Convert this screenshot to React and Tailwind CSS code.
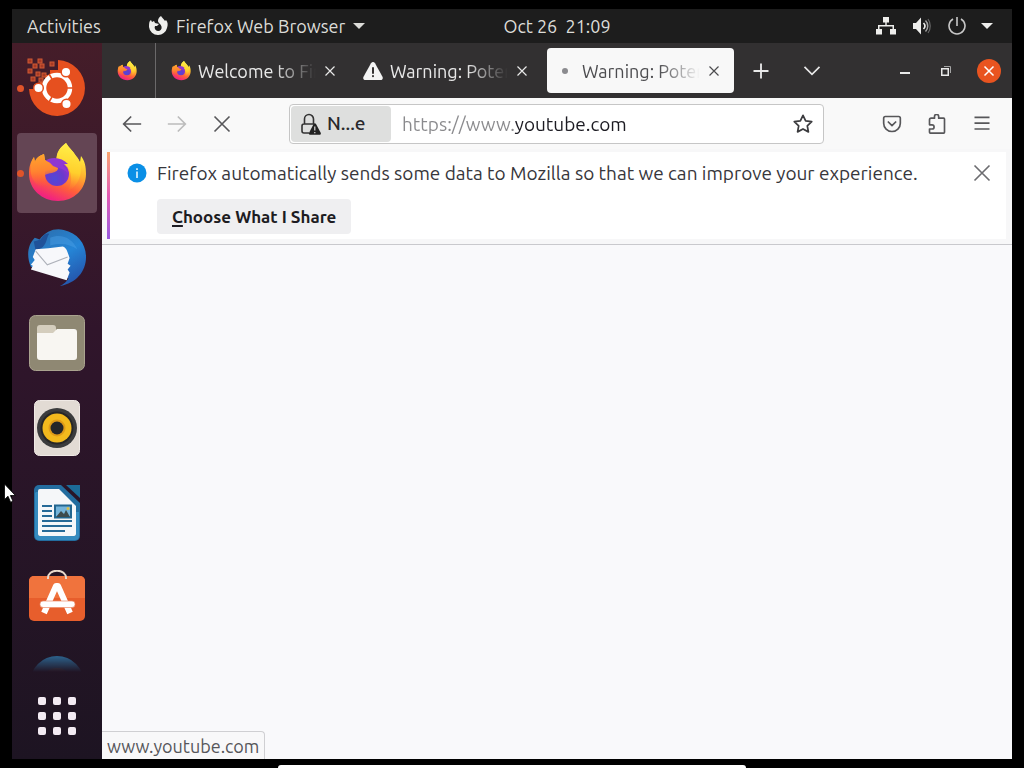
import React, { useId } from "react";

function FirefoxLogo({ className }) {
  const id = useId().replace(/[^a-zA-Z0-9]/g, "");
  return (
    <svg viewBox="0 0 58 60" className={className} aria-hidden="true">
      <defs>
        <linearGradient id={`${id}b`} x1="0.75" y1="0.05" x2="0.35" y2="1">
          <stop offset="0.1" stopColor="#fff03e" />
          <stop offset="0.4" stopColor="#ffb22e" />
          <stop offset="0.68" stopColor="#ff6138" />
          <stop offset="0.95" stopColor="#f2247e" />
        </linearGradient>
        <linearGradient id={`${id}f`} x1="0.6" y1="0" x2="0.5" y2="1">
          <stop offset="0" stopColor="#fff14a" />
          <stop offset="0.6" stopColor="#ffcf2c" />
          <stop offset="1" stopColor="#ff8a2a" stopOpacity="0" />
        </linearGradient>
        <linearGradient id={`${id}w`} x1="0.3" y1="0" x2="0.4" y2="1">
          <stop offset="0" stopColor="#ffa52c" />
          <stop offset="0.5" stopColor="#ff8430" />
          <stop offset="1" stopColor="#ff5a3a" stopOpacity="0" />
        </linearGradient>
        <radialGradient id={`${id}g`} cx="0.4" cy="0.7" r="0.75">
          <stop offset="0" stopColor="#4f49d8" />
          <stop offset="0.5" stopColor="#6a39cc" />
          <stop offset="1" stopColor="#9531cc" />
        </radialGradient>
      </defs>
      <path
        fill={`url(#${id}b)`}
        d="M38 0c3 5 7 8 10 13 2 2 3 4 4 6l1-6c4 5 5 11 5 18 0 15-12 27-28 27S1 46 1 31c0-6 1-12 5-17l1 5c1-4 4-6 9-8l1 6c3 2 5 2 11 3 0-8 2-14 10-20z"
      />
      <path
        fill={`url(#${id}f)`}
        d="M38 0c3 5 7 8 10 13 5 6 6 13 4 20-2 7-6 12-12 15 4-8 4-16 1-22-4-6-11-6-12-12 0-6 4-10 9-14z"
      />
      <circle cx="29" cy="31" r="12" fill={`url(#${id}g)`} />
      <path fill="#8f37d2" d="M17 18c6-5 17-4 23 3-3 0-4 0-5 2 3 2 4 4 5 7-6-5-10-6-17-6z" />
      <path
        fill={`url(#${id}w)`}
        d="M6 14l1 5c1-4 4-6 9-8l1 6c3 2 5 2 8 6l5 2c0 3-3 4-6 5-3 0-5 1-7 2 0 5 1 9 5 12-10 2-17-4-19-13-1-7 0-12 3-17z"
      />
    </svg>
  );
}

function UbuntuLogo() {
  const squares = [
    [3, 3], [13, 3], [8, 8], [15, 8], [3, 13], [11, 16], [17, 17], [6, 21], [25, 6], [14, 22],
  ];
  return (
    <svg viewBox="0 0 60 60" className="size-15" aria-hidden="true">
      <path fill="#e6501f" d="M31 2a28 28 0 1 1-29 29h6v-4h5v-4h5v-6h5v-5h8z" />
      {squares.map(([x, y]) => (
        <rect key={`${x}-${y}`} x={x - 2} y={y - 2} width="4" height="4" fill="#a83a25" stroke="#cf5a34" strokeWidth="1" />
      ))}
      <circle cx="30" cy="30" r="13" fill="none" stroke="#fff" strokeWidth="4.500" />
      <g stroke="#e6501f" strokeWidth="1.500">
        <path d="M40 30h7M25 21l-3-5M25 39l-3 5" />
        <circle cx="11.500" cy="30" r="4.800" fill="#fff" />
        <circle cx="39" cy="14" r="4.800" fill="#fff" />
        <circle cx="39.500" cy="46" r="4.800" fill="#fff" />
      </g>
    </svg>
  );
}

function ThunderbirdLogo() {
  return (
    <svg viewBox="0 0 62 62" className="size-15" aria-hidden="true">
      <defs>
        <linearGradient id="tb-body" x1="0.2" y1="0" x2="0.8" y2="1">
          <stop offset="0" stopColor="#2c6fae" />
          <stop offset="0.5" stopColor="#2585d6" />
          <stop offset="1" stopColor="#2450a8" />
        </linearGradient>
      </defs>
      <path fill="url(#tb-body)" d="M13 12C20 3 28 0 38 2c14 3 23 14 23 28 0 15-10 27-27 30 4-2 7-4 9-8L4 40C-1 28 1 17 8 10l3 1z" />
      <path fill="#1f5299" d="M14 12c3-5 6-7 9-6-3 4-2 9-7 14L9 24 7 14z" />
      <path fill="#50a6ea" opacity="0.4" d="M24 10c12-5 23 1 28 12-8-5-15-7-28-4z" />
      <path fill="#f7f8fb" d="M22 21l15-2c4 1 5 6 7 12l-2 6 3 2-3 4 2 3-3 8L4 43l2-4-2-1 4-5-2-3 3-8z" />
      <path fill="none" stroke="#aeb2ba" strokeWidth="1.200" d="M9 24l12 14 21-8" />
    </svg>
  );
}

function FilesLogo() {
  return (
    <svg viewBox="0 0 56 56" className="size-14" aria-hidden="true">
      <rect x="0.500" y="0.500" width="55" height="55" rx="6" fill="#8f8873" stroke="#aaa38f" />
      <path fill="#d4cdbd" d="M8 13a3 3 0 0 1 3-3h13a3 3 0 0 1 3 3v5H8z" />
      <path fill="#f8f6f2" d="M8 18h16l4-4h17a3 3 0 0 1 3 3v25a3 3 0 0 1-3 3H11a3 3 0 0 1-3-3z" />
    </svg>
  );
}

function RhythmboxLogo() {
  return (
    <svg viewBox="0 0 56 56" className="size-14" aria-hidden="true">
      <rect x="5.500" y="0.500" width="45" height="55" rx="5" fill="#e2dbd4" stroke="#f0eae6" />
      <circle cx="28" cy="28" r="20" fill="#3b3c3d" />
      <circle cx="28" cy="28" r="16.500" fill="#272727" />
      <circle cx="28" cy="28" r="14.500" fill="#f2b91d" />
      <circle cx="28" cy="28" r="8.500" fill="#df9b18" />
      <circle cx="28" cy="28" r="6.500" fill="#242629" />
    </svg>
  );
}

function WriterLogo() {
  return (
    <svg viewBox="0 0 56 56" className="size-14" aria-hidden="true">
      <path fill="#236d9f" d="M10 0h22l19 18v33a5 5 0 0 1-5 5H10a5 5 0 0 1-5-5V5a5 5 0 0 1 5-5z" />
      <path fill="#358bbf" d="M7 7h2v44h38V27h3v24a4 4 0 0 1-4 4H10a4 4 0 0 1-4-4V8z" />
      <path fill="#f5f7f9" d="M11 4h19l17 17v28a2 2 0 0 1-2 2H11a2 2 0 0 1-2-2V6a2 2 0 0 1 2-2z" />
      <path fill="#1c6b98" d="M37 0h14v13z" />
      <path stroke="#266a97" strokeWidth="2" d="M13 21h10M13 26h10M13 31h10M13 36h30M13 41h30M13 46h23" />
      <rect x="26" y="20.500" width="16" height="12" fill="#74b4da" stroke="#22668f" strokeWidth="2" />
      <path fill="#3d4b4e" d="M27 32l5-6 3 3 2-4 4 7z" />
      <circle cx="39" cy="23.500" r="1.500" fill="#d8bf4a" />
    </svg>
  );
}

function SoftwareLogo() {
  return (
    <svg viewBox="0 0 56 56" className="size-14" aria-hidden="true">
      <rect x="0" y="6" width="56" height="45" rx="5" fill="#e75e2c" />
      <path fill="#f0733d" d="M0 28h56V11a5 5 0 0 0-5-5H5a5 5 0 0 0-5 5z" />
      <path fill="none" stroke="#e9d9cc" strokeWidth="2" d="M19 9C18-2 38-2 37 9" />
      <path fill="none" stroke="#fff" strokeWidth="6" d="M15 43l12-27h2l12 27" strokeLinejoin="round" />
      <rect x="11" y="31" width="35" height="6.500" rx="3" fill="#fff" stroke="#e98b69" strokeWidth="0.700" />
    </svg>
  );
}

function HelpLogo() {
  return (
    <svg viewBox="0 0 56 56" className="size-14" aria-hidden="true">
      <circle cx="28" cy="28" r="27" fill="#2f77a8" />
      <circle cx="28" cy="28" r="15" fill="#6b7680" />
    </svg>
  );
}

function Glyph({ className, children, width = 1.6 }) {
  return (
    <svg viewBox="0 0 24 24" className={className} fill="none" stroke="currentColor" strokeWidth={width} aria-hidden="true">
      {children}
    </svg>
  );
}

const cross = <path d="M3 3l18 18M21 3L3 21" />;

const apps = [
  { name: "Ubuntu installer", logo: <UbuntuLogo />, running: true },
  { name: "Firefox", logo: <FirefoxLogo className="size-15" />, running: true, active: true },
  { name: "Thunderbird", logo: <ThunderbirdLogo /> },
  { name: "Files", logo: <FilesLogo /> },
  { name: "Rhythmbox", logo: <RhythmboxLogo /> },
  { name: "LibreOffice Writer", logo: <WriterLogo /> },
  { name: "Ubuntu Software", logo: <SoftwareLogo /> },
  { name: "Help", logo: <HelpLogo /> },
];

function TopBar() {
  return (
    <header className="flex h-[34px] shrink-0 items-center bg-[#1d1d1d] text-lg leading-6 text-[#dcdcd8]">
      <button className="w-[90px] shrink-0 pl-[15px] text-left">Activities</button>
      <div className="grid flex-1 grid-cols-[1fr_auto_1fr] items-center">
        <button className="ml-[46px] flex items-center gap-2 justify-self-start whitespace-nowrap">
          <svg viewBox="0 0 20 20" className="size-5" fill="#eeeeec" aria-hidden="true">
            <path d="M13 0c1 2 3 3 4 5l1-1c2 2 2 5 1 8a9 9 0 0 1-9 7 9 9 0 0 1-9-8C1 8 1 5 3 4l1 2 2-1 1 2 4 1-2 2H7a3.500 3.500 0 1 0 6.500.500C13 8 10 7 10 5s1-4 3-5z" />
          </svg>
          Firefox Web Browser
          <svg viewBox="0 0 12 6" className="h-[6px] w-3" fill="currentColor" aria-hidden="true"><path d="M0 0h12L6 6z" /></svg>
        </button>
        <button className="whitespace-pre">Oct 26  21:09</button>
        <button aria-label="System menu" className="mr-[19px] flex items-center gap-[15px] justify-self-end text-[#eeeeec]">
          <svg viewBox="-1 0 20 18" className="h-[18px] w-5" fill="currentColor" aria-hidden="true">
            <path d="M6 0h6v5.500h-2.300V8H17v4h2v5.500h-6V12h2.500V9.500h-13V12H5v5.500h-6V12h2V8h7.300V5.500H6z" />
          </svg>
          <svg viewBox="-1 0 20 20" className="size-5" aria-hidden="true">
            <path fill="currentColor" d="M1 7h3l5-5.500v17L4 13H1z" />
            <path fill="none" stroke="currentColor" strokeWidth="1.600" d="M11.500 7c2 2 2 4 0 6" />
            <path fill="none" stroke="#a5a5a5" strokeWidth="1.500" d="M13.500 4.500c3 3 3 8 0 11" />
            <path fill="none" stroke="#666" strokeWidth="1.200" d="M16 3c3 4 3 10 0 14" />
          </svg>
          <svg viewBox="-1 0 20 20" className="size-5" fill="none" stroke="#c8c8c8" strokeWidth="1.600" aria-hidden="true">
            <path d="M6 3a8 8 0 1 0 8 0M10 1v9" />
          </svg>
          <svg viewBox="0 0 12 6" className="h-[6px] w-3" fill="currentColor" aria-hidden="true"><path d="M0 0h12L6 6z" /></svg>
        </button>
      </div>
    </header>
  );
}

function Dock() {
  return (
    <nav aria-label="Dock" className="flex w-[90px] shrink-0 flex-col items-center bg-linear-to-b from-[#451d29] via-[#30152b] via-40% to-[#1d1422]">
      <div className="flex min-h-0 flex-1 flex-col gap-[5px] overflow-hidden pt-[5px] [mask-image:linear-gradient(to_top,transparent,black_20px)]">
        {apps.map((app) => (
          <button
            key={app.name}
            aria-label={app.name}
            className={`relative flex size-20 shrink-0 items-center justify-center rounded ${app.active ? "bg-[#644554]" : ""}`}
          >
            {app.running && <span className="absolute left-0 size-[7px] rounded-full bg-[#e0542a]" />}
            {app.logo}
          </button>
        ))}
      </div>
      <button aria-label="Show applications" className="grid h-[87px] shrink-0 grid-cols-3 place-content-center gap-[7px]">
        {Array.from({ length: 9 }, (_, i) => (
          <span key={i} className="size-2 rounded-xs bg-[#f3ebf3]" />
        ))}
      </button>
    </nav>
  );
}

function Tab({ title, icon, selected }) {
  return (
    <div
      role="tab"
      aria-selected={!!selected}
      className={`flex h-[45px] min-w-0 flex-[0_1_187px] items-center rounded pr-[14px] pl-2 ${selected ? "bg-[#f8f8f8] text-[#4c4c4f]" : "text-[#e9e9e9]"}`}
    >
      <span className="flex w-5 shrink-0 justify-center">{icon}</span>
      <span className="ml-[7px] min-w-0 flex-1 overflow-hidden text-lg leading-6 whitespace-nowrap [mask-image:linear-gradient(to_right,black_65%,transparent)]">
        {title}
      </span>
      <button aria-label="Close tab" className="ml-2 shrink-0">
        <Glyph className="size-3" width={2.4}>{cross}</Glyph>
      </button>
    </div>
  );
}

const warningIcon = (
  <svg viewBox="0 0 20 20" className="size-5" aria-hidden="true">
    <path fill="#f4f4f4" d="M8 2.200c1-1.700 3-1.700 4 0l7.500 13.500c.8 1.700 0 3.300-2 3.300h-15c-2 0-2.800-1.600-2-3.300z" />
    <path stroke="#353232" strokeWidth="2" strokeLinecap="round" d="M10 7v5M10 15v.2" />
  </svg>
);

function TabStrip() {
  return (
    <div className="flex h-[55px] shrink-0 items-center bg-[#323031] pr-[11px] text-[#e9e9e9]">
      <div role="tablist" className="flex h-full min-w-0 flex-1 items-center gap-[5px]">
        <div role="tab" aria-label="Pinned tab" className="mr-[2px] flex h-full w-[54px] shrink-0 items-center justify-center border-r border-[#6b696a] pr-[3px]">
          <FirefoxLogo className="size-5" />
        </div>
        <Tab title="Welcome to Firefox" icon={<FirefoxLogo className="size-5" />} />
        <Tab title="Warning: Potential" icon={warningIcon} />
        <Tab selected title="Warning: Potential" icon={<span className="size-[6px] rounded-full bg-[#8b8b8f]" />} />
        <button aria-label="New tab" className="flex w-11 shrink-0 justify-center">
          <Glyph className="size-5" width={2.2}><path d="M12 3v18M3 12h18" /></Glyph>
        </button>
        <button aria-label="List all tabs" className="flex w-12 shrink-0 justify-center">
          <Glyph className="size-5" width={2}><path d="M3 7l9 9 9-9" /></Glyph>
        </button>
      </div>
      <div className="flex shrink-0 items-center gap-[21px]">
        <button aria-label="Minimize" className="flex size-5 items-center justify-center pt-1">
          <span className="h-[2px] w-[10px] bg-[#e9e9e9]" />
        </button>
        <button aria-label="Restore" className="flex size-5 items-center justify-center">
          <svg viewBox="0 0 12 12" className="size-3" fill="none" stroke="currentColor" aria-hidden="true">
            <rect x="1.750" y="3.750" width="6.500" height="6.500" strokeWidth="1.500" />
            <path d="M4 1.500h6.500V8" stroke="#a5a5a5" />
          </svg>
        </button>
        <button aria-label="Close window" className="flex size-6 items-center justify-center rounded-full bg-[#e95420] text-white">
          <Glyph className="size-3" width={3}>{cross}</Glyph>
        </button>
      </div>
    </div>
  );
}

function ToolButton({ label, disabled, children }) {
  return (
    <button aria-label={label} disabled={disabled} className={`flex w-[45px] shrink-0 justify-center ${disabled ? "text-[#bcbcbc]" : "text-[#57575a]"}`}>
      <Glyph className="size-5" width={2}>{children}</Glyph>
    </button>
  );
}

function Toolbar() {
  return (
    <div className="flex h-[51px] shrink-0 items-center bg-[#f9f9f9] pr-2 pl-[7px]">
      <ToolButton label="Back"><path d="M23 12H2M11 3l-9 9 9 9" /></ToolButton>
      <ToolButton label="Forward" disabled><path d="M1 12h21M13 3l9 9-9 9" /></ToolButton>
      <ToolButton label="Stop">{cross}</ToolButton>
      <div className="mx-[45px] flex h-10 min-w-0 flex-1 items-center rounded border border-[#c6c6c6] bg-white p-px">
        <button className="flex h-full w-[100px] shrink-0 items-center gap-1.5 rounded-sm bg-[#dedfde] pl-[10px] text-[19px] font-medium text-[#29292c]">
          <svg viewBox="0 0 20 22" className="h-[22px] w-5" fill="none" stroke="#333" strokeWidth="1.600" aria-hidden="true">
            <path d="M8 20H3a2 2 0 0 1-2-2v-5a2 2 0 0 1 2-2h10M3.500 11V6a4.500 4.500 0 0 1 9 0v5" />
            <path fill="#222" stroke="none" d="M12.600 11c.6-1 1.800-1 2.400 0l4.700 8.800c.5 1-.1 2-1.200 2H9.300c-1.100 0-1.700-1-1.200-2z" />
            <path stroke="#ddd" strokeWidth="1.200" d="M13.800 13.500v4M13.800 19v1.200" />
          </svg>
          N...e
        </button>
        <input
          aria-label="Address"
          defaultValue="https://www.youtube.com"
          className="ml-[11px] min-w-0 flex-1 bg-linear-to-r from-[#8a8a8d] from-[112px] to-[#1c1b22] to-[112px] bg-clip-text text-[19px] leading-6 text-transparent outline-none"
        />
        <button aria-label="Bookmark this page" className="mr-2 shrink-0 text-[#3b3b3e]">
          <Glyph className="size-[22px]" width={1.9}>
            <path strokeLinejoin="round" d="M12 2.500l2.900 6 6.600.9-4.800 4.600 1.200 6.600-5.900-3.200-5.900 3.200 1.200-6.600L2.500 9.400l6.600-.9z" />
          </Glyph>
        </button>
      </div>
      <ToolButton label="Save to Pocket">
        <path strokeLinejoin="round" d="M4 3h16a2 2 0 0 1 2 2v6a10 10 0 0 1-20 0V5a2 2 0 0 1 2-2zM7 9l5 5 5-5" />
      </ToolButton>
      <ToolButton label="Extensions">
        <path strokeLinejoin="round" d="M3 10V7q0-2 2-2h4V3a2.500 2.500 0 0 1 5 0v2h6q1 0 1 1v16q0 1-1 1H4q-1 0-1-1v-4h3a2.500 2.500 0 0 0 0-5H3z" />
      </ToolButton>
      <ToolButton label="Open application menu"><path d="M3 4h18M3 11h18M3 18h18" /></ToolButton>
    </div>
  );
}

function Notice() {
  return (
    <div className="shrink-0 border-b border-[#c9c9cd] bg-[#f7f7f8] pt-[3px] pr-[6px] pb-[5px] pl-[5px]">
      <div role="status" className="flex bg-white">
        <span className="w-[3px] shrink-0 bg-linear-to-b from-[#f9a36c] via-[#e45bb4] to-[#9a59e0]" />
        <div className="flex min-w-0 flex-1 items-start pt-[11px] pr-[14px] pb-[5px] pl-[17px]">
          <svg viewBox="0 0 20 20" className="size-5 shrink-0" aria-hidden="true">
            <circle cx="10" cy="10" r="9.500" fill="#0a8fe6" />
            <path stroke="#e4f5ff" strokeWidth="1.600" d="M10 8.500V15M10 5.200v1.800" />
          </svg>
          <div className="ml-[10px] min-w-0 flex-1">
            <p className="text-[19px] leading-5 text-[#37363b]">
              Firefox automatically sends some data to Mozilla so that we can improve your experience.
            </p>
            <button className="mt-4 h-[35px] rounded bg-[#efeff1] px-[15px] text-[17px] font-bold text-[#1d1c22]">
              <span className="underline decoration-2 underline-offset-2">C</span>hoose What I Share
            </button>
          </div>
          <button aria-label="Dismiss" className="shrink-0 text-[#6c6c70]">
            <Glyph className="size-5" width={2}>{cross}</Glyph>
          </button>
        </div>
      </div>
    </div>
  );
}

export default function App() {
  return (
    <div className="relative flex h-screen flex-col overflow-hidden bg-black px-3 py-[9px] font-['Ubuntu','Noto_Sans',sans-serif]">
      <TopBar />
      <div className="flex min-h-0 flex-1">
        <Dock />
        <div className="flex min-w-0 flex-1 flex-col">
          <TabStrip />
          <Toolbar />
          <Notice />
          <main className="flex min-h-0 flex-1 flex-col items-start justify-end bg-[#f9f9fb]">
            <p className="h-7 rounded-tr border-t border-r border-[#cfcfd2] bg-[#f8f8f9] px-[5px] text-lg leading-7 text-[#56565a]">
              www.youtube.com
            </p>
          </main>
        </div>
      </div>
      <div className="absolute bottom-0 left-[278px] h-[3px] w-[468px] rounded-t-full bg-white" />
      <svg viewBox="0 0 12 20" className="absolute top-[483px] left-1 h-5 w-3" aria-hidden="true">
        <path fill="#fff" stroke="#000" strokeWidth="0.800" d="M.5 1v15.500l3.500-3.300 2.600 6 2.400-1-2.600-5.700h5z" />
      </svg>
    </div>
  );
}
